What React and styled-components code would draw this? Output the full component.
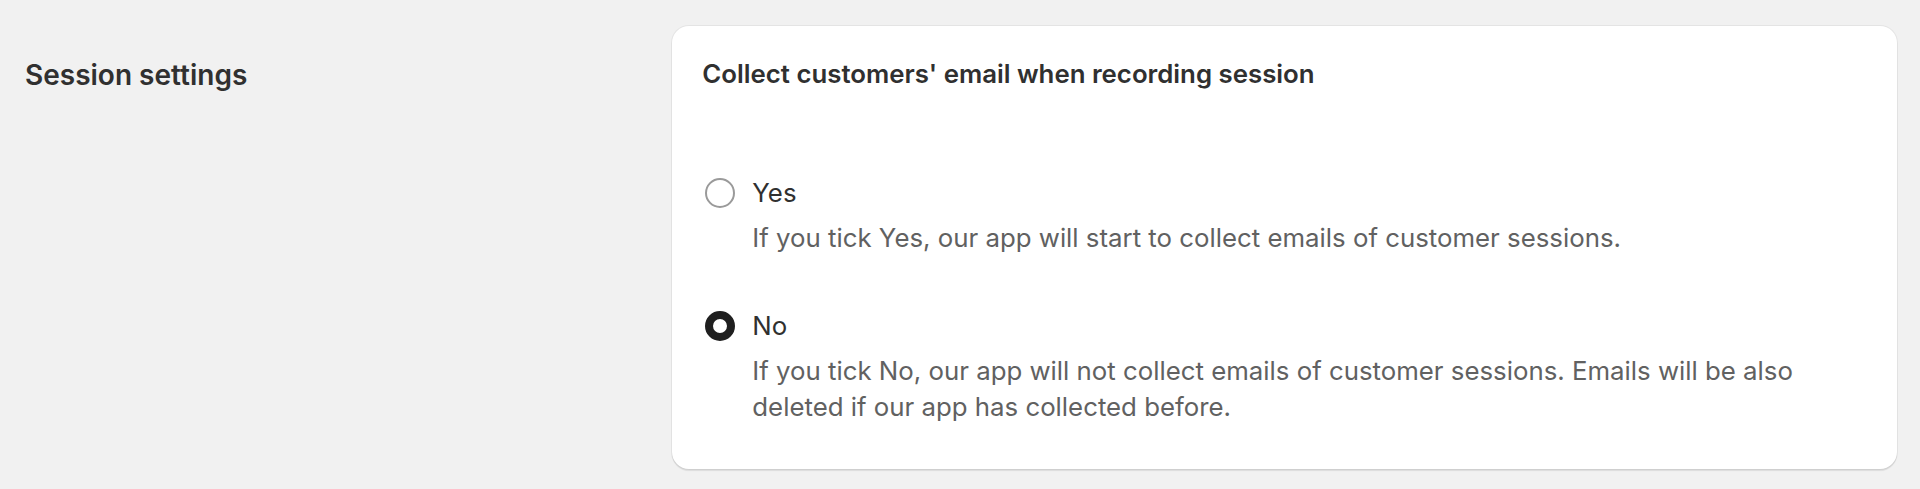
import React, { useState } from "react";
import styled, { createGlobalStyle } from "styled-components";

const GlobalStyle = createGlobalStyle`
  html, body {
    margin: 0;
    padding: 0;
    background: #f1f1f1;
  }
  body {
    font-family: Inter, "Noto Sans", "Liberation Sans", sans-serif;
    color: #303030;
    -webkit-font-smoothing: antialiased;
  }
`;

const Page = styled.div`
  width: 1920px;
  height: 489px;
  box-sizing: border-box;
  padding: 26px 23px 0 25px;
  background: #f1f1f1;
`;

const Section = styled.section`
  display: grid;
  grid-template-columns: 1fr 2fr;
  column-gap: 35px;
  align-items: start;
`;

const Annotation = styled.div`
  padding-top: 31px;
`;

const SectionTitle = styled.h2`
  margin: 0;
  font-size: 28px;
  line-height: 36px;
  font-weight: 600;
  color: #303030;
`;

const Card = styled.div`
  background: #ffffff;
  border-radius: 17px;
  padding: 30px 30px 44px 30px;
  box-shadow: 0 0 0 1px rgba(0, 0, 0, 0.05), 0 2px 1px rgba(0, 0, 0, 0.09);
`;

const CardTitle = styled.h3`
  margin: 0;
  font-size: 25.8px;
  line-height: 36px;
  font-weight: 600;
  color: #303030;
`;

const ChoiceList = styled.div`
  display: flex;
  flex-direction: column;
  gap: 52px;
  margin-top: 83px;
`;

const Choice = styled.label`
  display: grid;
  grid-template-columns: 30px 1fr;
  column-gap: 17px;
  padding-left: 3px;
  cursor: pointer;
`;

const RadioCircle = styled.span`
  width: 30px;
  height: 30px;
  box-sizing: border-box;
  border-radius: 50%;
  margin-top: 3px;
  background: #ffffff;
  border: ${(p) => (p.$checked ? "8.5px solid #1f1f1f" : "2px solid #9a9a9a")};
`;

const Label = styled.span`
  font-size: 25.8px;
  line-height: 36px;
  color: #303030;
`;

const Help = styled.p`
  grid-column: 2;
  margin: 9px 0 0 0;
  font-size: 25.8px;
  line-height: 36px;
  color: #616161;
`;

const options = [
  {
    value: "yes",
    label: "Yes",
    help: "If you tick Yes, our app will start to collect emails of customer sessions.",
  },
  {
    value: "no",
    label: "No",
    help: "If you tick No, our app will not collect emails of customer sessions. Emails will be also deleted if our app has collected before.",
  },
];

export default function App() {
  const [value, setValue] = useState("no");
  return (
    <>
      <GlobalStyle />
      <Page>
        <Section>
          <Annotation>
            <SectionTitle>Session settings</SectionTitle>
          </Annotation>
          <Card>
            <CardTitle>Collect customers' email when recording session</CardTitle>
            <ChoiceList role="radiogroup">
              {options.map((o) => (
                <Choice key={o.value} onClick={() => setValue(o.value)}>
                  <RadioCircle $checked={value === o.value} />
                  <Label>{o.label}</Label>
                  <Help>{o.help}</Help>
                </Choice>
              ))}
            </ChoiceList>
          </Card>
        </Section>
      </Page>
    </>
  );
}
